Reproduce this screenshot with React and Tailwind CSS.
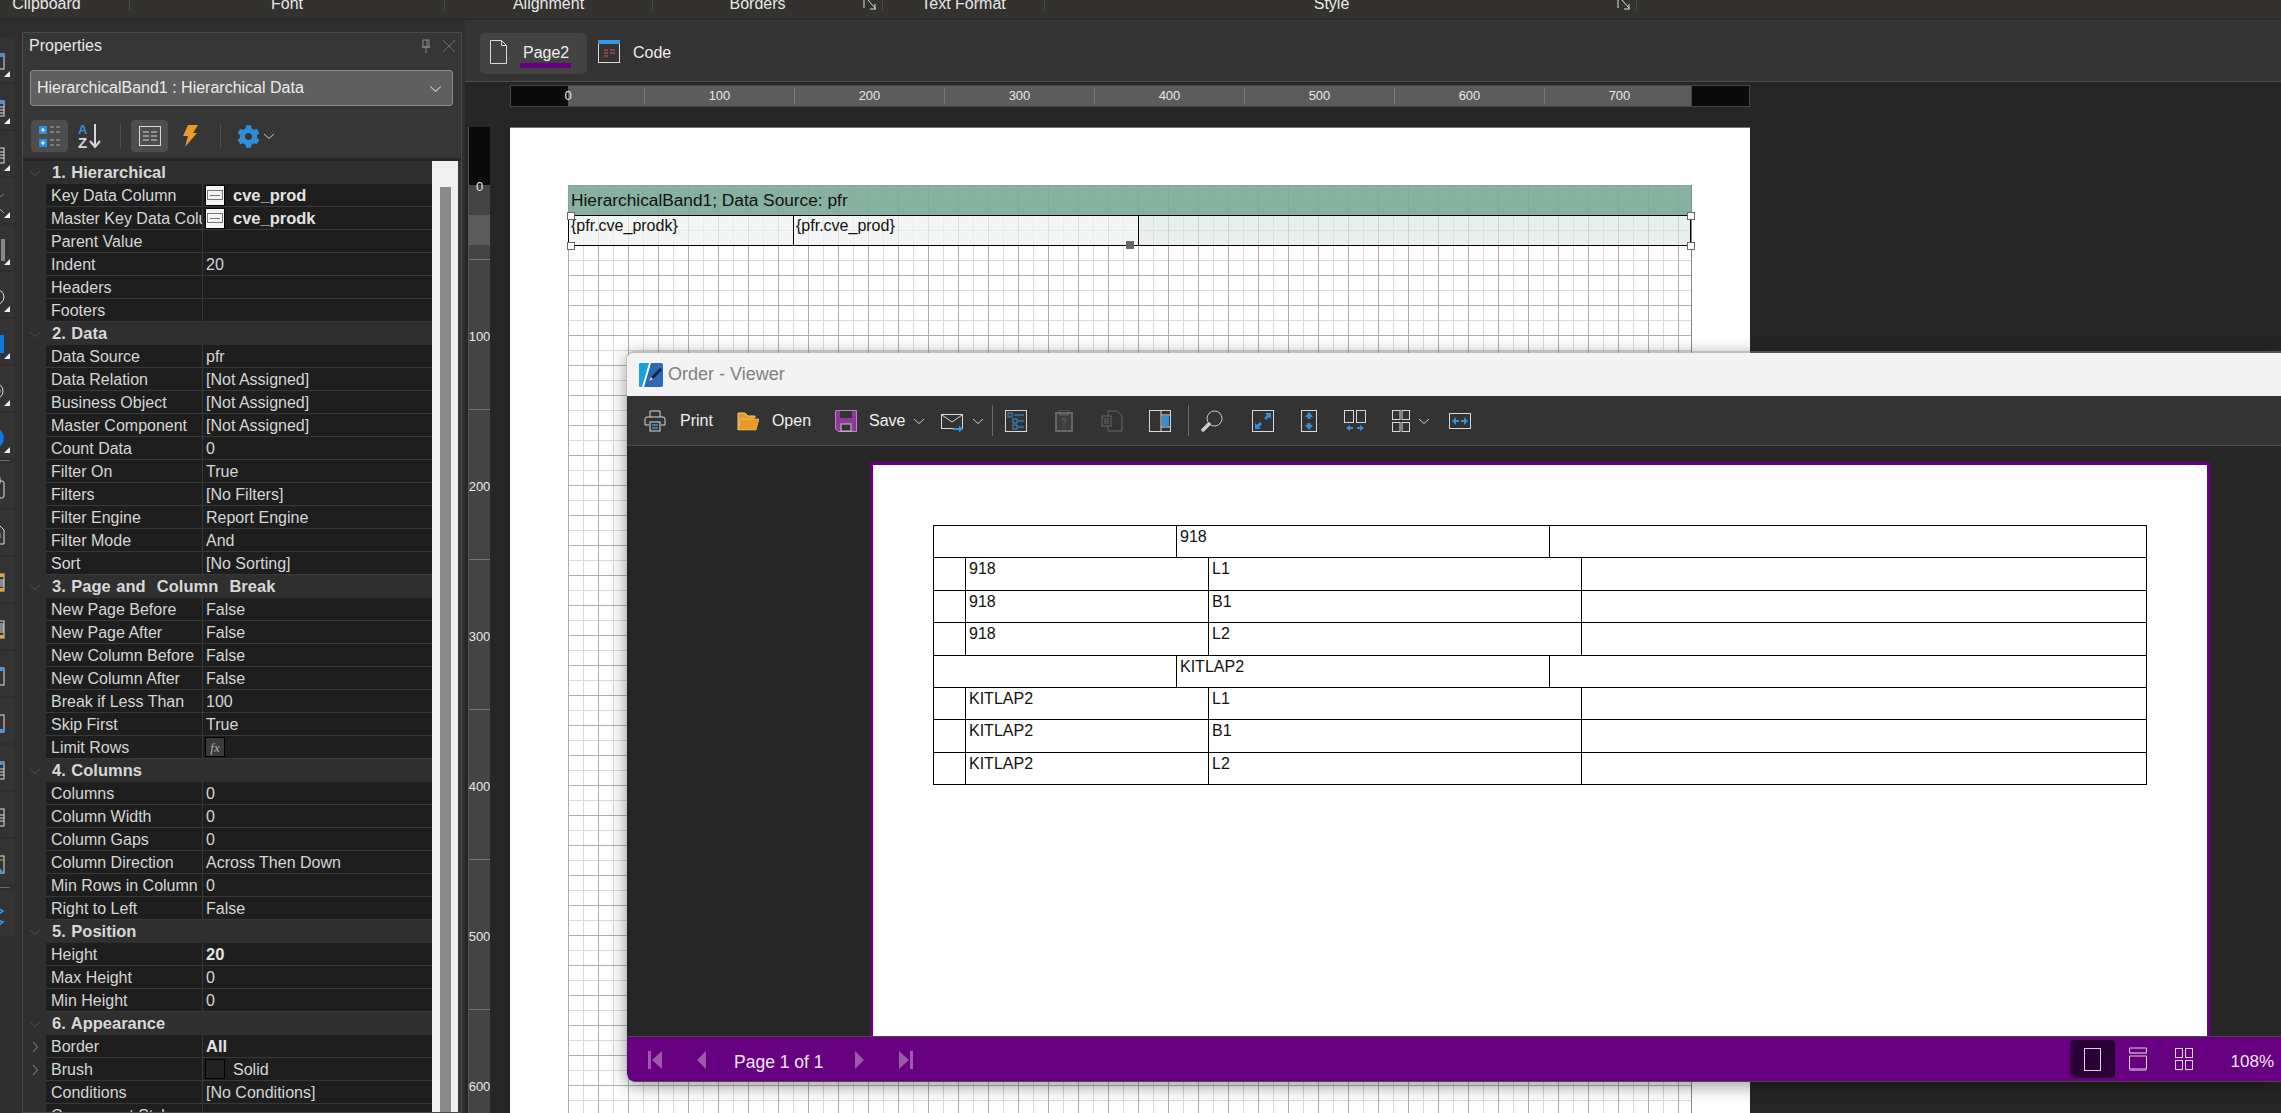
import React from 'react';
import { FaCog } from 'react-icons/fa';

const Chev = ({ className = '', dir = 'down', w = 10, color = '#c8c8c8' }) => (
  <svg width={w} height={w} viewBox="0 0 10 10" className={className} fill="none" stroke={color} strokeWidth="1">
    {dir === 'down' ? <path d="M0 3l5 4.500L10 3" /> : <path d="M3 0l4.500 5L3 10" />}
  </svg>
);

const ribbon = [
  ['Clipboard', 'w-[130px] pr-[36px]', false],
  ['Font', 'w-[315px]', false],
  ['Alignment', 'w-[208px]', false],
  ['Borders', 'w-[230px] pr-[20px]', true],
  ['Text Format', 'w-[162px]', false],
  ['Style', 'w-[592px] pr-[18px]', true],
];

const Launcher = () => (
  <svg width="14" height="10" viewBox="0 0 14 10" className="absolute right-[5px] top-0" fill="none" stroke="#d8d8d8" strokeWidth="1">
    <path d="M1 0v8M13 9H7M5 0l7 8M12 4v5" />
  </svg>
);

const railIcons = [
  <g key="a"><rect x="0" y="3" width="14" height="15" stroke="#ddd" fill="none" /><rect x="0" y="3" width="14" height="3" fill="#3a96e0" /></g>,
  <g key="b"><rect x="0" y="3" width="14" height="15" stroke="#ddd" fill="none" /><rect x="0" y="3" width="14" height="3" fill="#3a96e0" /><path d="M0 9h14M0 12h14M0 15h14" stroke="#ddd" /></g>,
  <g key="c"><rect x="0" y="3" width="14" height="15" stroke="#ddd" fill="none" /><path d="M5 7h9M5 10h9M5 13h9" stroke="#ddd" /></g>,
  <g key="d"><path d="M0 4c5 4 12 0 14-2M0 6l10-4" stroke="#3a96e0" fill="none" /><path d="M0 15c5 0 10 1 14 6" stroke="#d8b25c" fill="none" /></g>,
  <g key="e"><path d="M1 0v22M4 0v22M6 0v22M9 0v22M12 0v22M14 0v22" stroke="#ddd" /></g>,
  <g key="f"><ellipse cx="5" cy="11" rx="9" ry="8" stroke="#ddd" fill="none" /></g>,
  <g key="g"><rect x="0" y="2" width="14" height="18" fill="#1479d6" /></g>,
  <g key="h"><circle cx="5" cy="11" r="8" stroke="#ddd" fill="none" /><circle cx="5" cy="11" r="5" stroke="#ddd" fill="#555" /></g>,
  <g key="i"><ellipse cx="5" cy="11" rx="9" ry="10" fill="#1479d6" /></g>,
  'sep',
  <g key="j"><rect x="0" y="4" width="14" height="17" rx="2" stroke="#ddd" fill="none" /><rect x="4" y="1" width="6" height="5" stroke="#ddd" fill="#333" /></g>,
  <g key="k"><path d="M0 2h10l4 4v14H0z" stroke="#ddd" fill="none" /><path d="M5 9h5v5H5z" stroke="#aaa" fill="none" /></g>,
  <g key="l"><rect x="0" y="3" width="14" height="17" stroke="#ddd" fill="none" /><rect x="0" y="3" width="14" height="3" fill="#eaa12f" /><rect x="0" y="17" width="14" height="3" fill="#eaa12f" /><path d="M5 9h9M5 11h9M5 13h9M5 15h9" stroke="#ddd" /></g>,
  <g key="m"><rect x="0" y="3" width="14" height="17" stroke="#ddd" fill="none" /><rect x="0" y="17" width="14" height="3" fill="#eaa12f" /><path d="M5 6h9M5 8h9M5 10h9M5 12h9M5 14h9" stroke="#ddd" /></g>,
  <g key="n"><rect x="0" y="3" width="14" height="17" stroke="#ddd" fill="none" /><rect x="0" y="3" width="14" height="3" fill="#3a96e0" /></g>,
  <g key="o"><rect x="0" y="3" width="14" height="17" stroke="#ddd" fill="none" /><rect x="0" y="17" width="14" height="3" fill="#3a96e0" /></g>,
  <g key="p"><rect x="0" y="3" width="14" height="17" stroke="#ddd" fill="none" /><rect x="0" y="3" width="14" height="3" fill="#3a96e0" /><path d="M5 10h9M5 13h9M5 16h9" stroke="#ddd" /></g>,
  <g key="q"><rect x="0" y="3" width="14" height="17" stroke="#ddd" fill="none" /><path d="M5 9h9M5 12h9M5 15h9" stroke="#ddd" /></g>,
  <g key="r"><rect x="0" y="3" width="14" height="17" stroke="#ddd" fill="none" /><path d="M0 20L14 20 8 13z" fill="#3a96e0" /><path d="M8 7h6" stroke="#e9a030" /></g>,
  'sep',
  <g key="s"><path d="M0 3l4-2 9 5-4 3M1 16l4-2 8 3-4 3" stroke="#3a96e0" fill="none" strokeWidth="1.500" /></g>,
];

const RailTile = ({ icon, arrow }) => (
  <div className="relative w-[15px] h-[45px] bg-[#333333] overflow-hidden flex items-center">
    <svg width="15" height="22" viewBox="0 0 15 22" className="-ml-[10px] mt-[5px] shrink-0" overflow="hidden">{icon}</svg>
    {arrow && (
      <svg width="6" height="6" viewBox="0 0 6 6" className="absolute left-[4px] bottom-[5px]"><path d="M6 0v6H0z" fill="#f0f0f0" /></svg>
    )}
  </div>
);

const sections = [
  ['1. Hierarchical', [
    ['Key Data Column', 'cve_prod', 'tile'],
    ['Master Key Data Column', 'cve_prodk', 'tile'],
    ['Parent Value', ''],
    ['Indent', '20'],
    ['Headers', ''],
    ['Footers', ''],
  ]],
  ['2. Data', [
    ['Data Source', 'pfr'],
    ['Data Relation', '[Not Assigned]'],
    ['Business Object', '[Not Assigned]'],
    ['Master Component', '[Not Assigned]'],
    ['Count Data', '0'],
    ['Filter On', 'True'],
    ['Filters', '[No Filters]'],
    ['Filter Engine', 'Report Engine'],
    ['Filter Mode', 'And'],
    ['Sort', '[No Sorting]'],
  ]],
  ['3. Page and  Column  Break', [
    ['New Page Before', 'False'],
    ['New Page After', 'False'],
    ['New Column Before', 'False'],
    ['New Column After', 'False'],
    ['Break if Less Than', '100'],
    ['Skip First', 'True'],
    ['Limit Rows', '', 'fx'],
  ]],
  ['4. Columns', [
    ['Columns', '0'],
    ['Column Width', '0'],
    ['Column Gaps', '0'],
    ['Column Direction', 'Across Then Down'],
    ['Min Rows in Column', '0'],
    ['Right to Left', 'False'],
  ]],
  ['5. Position', [
    ['Height', '20', 'bold'],
    ['Max Height', '0'],
    ['Min Height', '0'],
  ]],
  ['6. Appearance', [
    ['Border', 'All', 'bold', true],
    ['Brush', 'Solid', 'brush', true],
    ['Conditions', '[No Conditions]'],
    ['Component Style', ''],
  ]],
];

const ValueCell = ({ value, kind }) => {
  if (kind === 'tile') {
    return (
      <div className="flex items-center h-[22px] pl-[2px]">
        <div className="w-[20px] h-[21px] bg-[#f4f4f4] border border-black flex items-center justify-center shrink-0">
          <div className="w-[16px] h-[10px] border border-[#777] flex items-center justify-center"><div className="w-[10px] h-px bg-[#777]" /></div>
        </div>
        <span className="ml-[8px] font-bold text-[16.5px] text-[#e2e2e2]">{value}</span>
      </div>
    );
  }
  if (kind === 'fx') {
    return (
      <div className="flex items-center h-[22px] pl-[2px]">
        <div className="w-[20px] h-[20px] bg-[#3a3a3a] border border-black flex items-center justify-center font-['Liberation_Serif',serif] italic text-[13px] text-[#aaa]">fx</div>
      </div>
    );
  }
  if (kind === 'brush') {
    return (
      <div className="flex items-center h-[22px] pl-[2px]">
        <div className="w-[20px] h-[20px] bg-[#222] border border-black shrink-0" />
        <span className="ml-[8px]">{value}</span>
      </div>
    );
  }
  return <div className={`pl-[3px] ${kind === 'bold' ? 'font-bold text-[16.5px] text-[#e2e2e2]' : ''}`}>{value}</div>;
};

const PropRow = ({ label, value, kind, expand }) => (
  <div className="flex h-[23px]">
    <div className="w-[23px] flex items-center justify-center bg-[#2f2f2f]">
      {expand && <Chev dir="right" color="#8c8c8c" />}
    </div>
    <div className="flex-1 flex bg-[#1e1e1e] border-b border-[#383838] leading-[23px] text-[#d6d6d6]">
      <div className="w-[157px] pl-[5px] border-r border-[#383838] overflow-hidden whitespace-nowrap">{label}</div>
      <div className="flex-1 overflow-hidden whitespace-nowrap">
        <ValueCell value={value} kind={kind} />
      </div>
    </div>
  </div>
);

const CatRow = ({ title }) => (
  <div className="flex h-[23px] bg-[#2f2f2f]">
    <div className="w-[23px] flex items-center justify-center"><Chev color="#4d4d4d" /></div>
    <div className="pl-[6px] font-bold text-[16.5px] [word-spacing:1px] leading-[23px] text-[#d8d8d8] whitespace-pre">{title}</div>
  </div>
);

const PropertiesPanel = () => (
  <div className="ml-[7px] mt-[12px] w-[440px] border border-[#4a4a4a] bg-[#363636] flex flex-col overflow-hidden">
    <div className="h-[37px] flex items-start justify-between pt-[1px] pl-[6px] pr-[5px] text-[#e8e8e8]">
      <span>Properties</span>
      <div className="flex items-center gap-[10px] pt-[5px]">
        <svg width="12" height="14" viewBox="0 0 12 14" fill="none" stroke="#8a8a8a"><path d="M3 1h6v7H3zM1.500 8h9M6 8v6" /><path d="M7 1v7" /></svg>
        <svg width="14" height="14" viewBox="0 0 14 14" fill="none" stroke="#6e6e6e"><path d="M1 1l12 12M13 1L1 13" /></svg>
      </div>
    </div>
    <div className="mx-[7px] w-[423px] h-[36px] rounded-[3px] bg-[#5f5f5f] border border-[#8a8a8a] flex items-center justify-between pl-[6px] pr-[11px] text-[#ececec]">
      <span>HierarchicalBand1 : Hierarchical Data</span>
      <Chev w={11} />
    </div>
    <div className="h-[32px] mt-[14px] flex items-center pl-[8px]">
      <div className="w-[37px] h-[32px] rounded-[4px] bg-[#4d4d4d] flex items-center justify-center">
        <svg width="24" height="24" viewBox="0 0 24 24" fill="none">
          <rect x="1" y="2" width="8" height="8" rx="1" fill="#2f8fdc" /><path d="M3 6h4M5 4v4" stroke="#fff" />
          <rect x="1" y="15" width="8" height="8" rx="1" fill="#2f8fdc" /><path d="M3 19h4M5 17v4" stroke="#fff" />
          <path d="M12 3h4M18 3h4M12 8h4M18 8h4M12 16h4M18 16h4M12 21h4M18 21h4" stroke="#aaa" />
        </svg>
      </div>
      <svg width="24" height="26" viewBox="0 0 24 26" className="ml-[10px]" fill="none">
        <text x="0" y="11" fontFamily="Liberation Sans, sans-serif" fontWeight="bold" fontSize="13" fill="#2f8fdc">A</text>
        <text x="0" y="25" fontFamily="Liberation Sans, sans-serif" fontWeight="bold" fontSize="15" fill="#d8d8d8">Z</text>
        <path d="M17 1v22M12 18l5 6 5-6" stroke="#d8d8d8" strokeWidth="2" />
      </svg>
      <div className="w-px h-[24px] bg-[#4f4f4f] ml-[18px]" />
      <div className="w-[37px] h-[32px] rounded-[4px] bg-[#4d4d4d] flex items-center justify-center ml-[10px]">
        <svg width="24" height="22" viewBox="0 0 24 22" fill="none" stroke="#d8d8d8">
          <rect x="1.500" y="1.500" width="21" height="19" />
          <path d="M5 7h6M13 7h6M5 11h6M13 11h6M5 15h6M13 15h6" />
        </svg>
      </div>
      <svg width="16" height="22" viewBox="0 0 16 22" className="ml-[14px]">
        <path d="M6 0h10l-5 8h4L3 22l3-11H1z" fill="#e89a2c" />
      </svg>
      <div className="w-px h-[24px] bg-[#4f4f4f] ml-[22px]" />
      <FaCog size={23} color="#2e8fd8" className="ml-[16px]" />
      <Chev className="ml-[4px]" />
    </div>
    <div className="mt-[6px] h-[3px] bg-[#262626]" />
    <div className="flex flex-1 min-h-0 pr-[3px]">
      <div className="w-[409px] overflow-hidden">
        {sections.map(([title, rows]) => (
          <div key={title}>
            <CatRow title={title} />
            {rows.map(([l, v, k, e]) => <PropRow key={l} label={l} value={v} kind={k} expand={e} />)}
          </div>
        ))}
      </div>
      <div className="w-[26px] bg-[#f0f0f0] pt-[26px] pl-[8px]">
        <div className="w-[11px] h-full bg-[#8a8a8a]" />
      </div>
    </div>
  </div>
);

const HRuler = () => (
  <div className="w-[1240px] h-[22px] flex border border-[#444] text-[13px] text-[#e8e8e8] leading-[16px]">
    <div className="w-[57px] bg-[#0a0a0a] shrink-0" />
    <div className="w-[1123px] shrink-0 bg-[#5c5c5c] flex">
      <div className="w-[76px] shrink-0 my-[2px]"><span className="block w-[8px] -ml-[4px] text-center">0</span></div>
      <div className="flex-1 flex overflow-hidden">
        {[100, 200, 300, 400, 500, 600, 700].map((n) => (
          <div key={n} className="w-[150px] shrink-0 my-[2px] border-l border-[#777] text-center">{n}</div>
        ))}
      </div>
    </div>
    <div className="flex-1 bg-[#0a0a0a] border-l border-[#444]" />
  </div>
);

const VRuler = () => (
  <div className="w-[22px] shrink-0 border-l border-[#555] bg-[#444444] text-[13px] text-[#e8e8e8] text-center leading-[16px] overflow-hidden">
    <div className="h-[58px] bg-[#0a0a0a]" />
    <div className="h-[30px] relative"><div className="absolute left-0 right-0 -top-[6px]">0</div></div>
    <div className="h-[30px] bg-[#5c5c5c]" />
    <div className="h-[15px] border-b border-[#777]" />
    {[100, 200, 300, 400, 500, 600].map((n) => (
      <div key={n} className="h-[150px] border-b border-[#777] flex items-center justify-center pt-[4px]">{n}</div>
    ))}
  </div>
);

const Handle = ({ className }) => (
  <div className={`absolute w-[8px] h-[8px] bg-white border border-[#666] ${className}`} />
);

const Page = () => (
  <div className="ml-[20px] w-[1240px] bg-white border-t border-[#777] pl-[58px] pt-[57px]">
    <div className="relative w-[1124px] h-[1000px] border-r border-[#888] bg-[linear-gradient(to_right,#aeaeae_1px,transparent_1px),linear-gradient(to_bottom,#aeaeae_1px,transparent_1px),linear-gradient(to_right,#dadada_1px,transparent_1px),linear-gradient(to_bottom,#dadada_1px,transparent_1px)] bg-[size:30px_30px,30px_30px,15px_15px,15px_15px]">
      <div className="h-[30px] bg-[#7ca999e8] text-[17.3px] leading-[30px] pl-[3px] text-[#111] whitespace-nowrap">HierarchicalBand1; Data Source: pfr</div>
      <div className="h-[31px] flex border-y border-black border-x text-[16px] text-[#111] leading-[20px]">
        <div className="w-[225px] bg-[#f0f3f1b8] border-r border-black pl-[2px]">{'{pfr.cve_prodk}'}</div>
        <div className="w-[345px] bg-[#f0f3f1b8] border-r border-black pl-[2px]">{'{pfr.cve_prod}'}</div>
        <div className="flex-1 bg-[#dce6e1a0]" />
      </div>
      <Handle className="-left-[1px] top-[27px]" />
      <Handle className="-left-[1px] top-[57px]" />
      <Handle className="-right-[4px] top-[27px]" />
      <Handle className="-right-[4px] top-[57px]" />
      <div className="absolute left-[558px] top-[56px] w-[8px] h-[8px] bg-[#666]" />
    </div>
  </div>
);

const TbIcon = ({ children, w = 22, h = 22, className = '' }) => (
  <svg width={w} height={h} viewBox={`0 0 ${w} ${h}`} fill="none" className={`shrink-0 ${className}`}>{children}</svg>
);

const ViewerToolbar = () => (
  <div className="h-[50px] bg-[#333333] border-b border-[#4a4a4a] flex items-center text-[#f0f0f0] pl-[17px]">
    <TbIcon>
      <path d="M6 7V1h10v6M5 15H1V9q0-2 2-2h16q2 0 2 2v6h-4" stroke="#d8d8d8" />
      <rect x="6" y="12" width="10" height="9" stroke="#d8d8d8" />
      <path d="M8 15h6M8 18h6" stroke="#3a96e0" strokeWidth="1.500" />
    </TbIcon>
    <span className="ml-[14px]">Print</span>
    <TbIcon className="ml-[24px]">
      <path d="M1 20V3h7l3 3h7v2" stroke="#f0d070" fill="#e8992a" />
      <path d="M1 20l3-11h18l-3 11z" fill="#e8992a" stroke="#f0d070" strokeWidth=".6" />
    </TbIcon>
    <span className="ml-[13px]">Open</span>
    <TbIcon className="ml-[24px]">
      <path d="M.5.5h21v21H3L.5 19z" fill="#8b3a96" stroke="#c57ad0" />
      <rect x="5" y="1" width="12" height="7" fill="#333" />
      <rect x="6" y="14" width="10" height="7" fill="#333" stroke="#d8c0dc" />
    </TbIcon>
    <span className="ml-[12px]">Save</span>
    <Chev className="ml-[8px]" />
    <TbIcon className="ml-[17px]">
      <rect x=".5" y="4.500" width="21" height="14" stroke="#d8d8d8" />
      <path d="M1 5l10 7 10-7" stroke="#d8d8d8" />
      <path d="M12 18h6v-2.500l4 3.500-4 3.500V20h-6z" fill="#3a96e0" />
    </TbIcon>
    <Chev className="ml-[10px]" />
    <div className="w-px h-[31px] bg-[#6a6a6a] ml-[9px]" />
    <TbIcon className="ml-[12px]">
      <rect x=".5" y=".5" width="21" height="21" stroke="#d8d8d8" />
      <rect x="3" y="3" width="4" height="4" stroke="#3a96e0" />
      <path d="M9 5h10M13 11h6M13 17h6" stroke="#3a96e0" />
      <rect x="8" y="9" width="4" height="4" stroke="#3a96e0" />
      <rect x="8" y="15" width="4" height="4" stroke="#3a96e0" />
    </TbIcon>
    <TbIcon w={18} className="ml-[28px]">
      <rect x="1" y="3" width="16" height="18" stroke="#666" strokeWidth="2" fill="#3d3d3d" />
      <rect x="5" y="0" width="8" height="5" stroke="#666" />
      <text x="6" y="16" fontSize="10" fill="#666" fontFamily="Liberation Sans, sans-serif">?</text>
    </TbIcon>
    <TbIcon className="ml-[28px]">
      <path d="M7 6V1h9l5 5v15H7v-5" stroke="#666" />
      <rect x="1" y="6" width="9" height="10" stroke="#666" />
      <path d="M3 9h5M3 11h5M3 13h5" stroke="#666" />
    </TbIcon>
    <TbIcon className="ml-[26px]">
      <rect x=".5" y=".5" width="21" height="21" stroke="#d8d8d8" />
      <path d="M12 1v20M12 5h9M12 17h9" stroke="#d8d8d8" />
      <rect x="13" y="6" width="7" height="10" fill="#2f8fdc" />
    </TbIcon>
    <div className="w-px h-[31px] bg-[#6a6a6a] ml-[17px]" />
    <TbIcon className="ml-[12px]">
      <circle cx="13.500" cy="8.500" r="7.500" stroke="#cfcfcf" />
      <path d="M8 14L2 20" stroke="#cfcfcf" strokeWidth="3.500" strokeLinecap="round" />
    </TbIcon>
    <TbIcon className="ml-[29px]">
      <rect x=".5" y=".5" width="21" height="21" stroke="#d8d8d8" />
      <path d="M13 3h6v6l-2-2-3 3-2-2 3-3zM9 19H3v-6l2 2 3-3 2 2-3 3z" fill="#3391dc" />
    </TbIcon>
    <TbIcon w={16} className="ml-[27px]">
      <rect x=".5" y=".5" width="15" height="21" stroke="#d8d8d8" />
      <path d="M8 2l4 5H9.500v2h-3V7H4zM8 20l4-5H9.500v-2h-3v2H4z" fill="#3391dc" />
    </TbIcon>
    <TbIcon className="ml-[27px]">
      <rect x=".5" y=".5" width="9" height="12" stroke="#d8d8d8" />
      <rect x="12.500" y=".5" width="9" height="12" stroke="#d8d8d8" />
      <path d="M2 18l4-3v2h3v2H6v2zM20 18l-4-3v2h-3v2h3v2z" fill="#3391dc" />
    </TbIcon>
    <TbIcon w={18} className="ml-[26px]">
      <rect x=".5" y=".5" width="7.500" height="9" stroke="#d8d8d8" />
      <rect x="10" y=".5" width="7.500" height="9" stroke="#d8d8d8" />
      <rect x=".5" y="12.500" width="7.500" height="9" stroke="#d8d8d8" />
      <rect x="10" y="12.500" width="7.500" height="9" stroke="#d8d8d8" />
    </TbIcon>
    <Chev className="ml-[9px]" />
    <TbIcon className="ml-[20px]" h={16}>
      <rect x=".5" y=".5" width="21" height="15" stroke="#d8d8d8" />
      <path d="M3 8l4-4v3h3v2H7v3zM19 8l-4-4v3h-3v2h3v3z" fill="#3391dc" />
    </TbIcon>
  </div>
);

const Cell = ({ w, text, last }) => (
  <div className={`${w || ''} ${last ? 'flex-1' : 'border-r border-black'} pl-[3px] leading-[21px] whitespace-nowrap`}>{text}</div>
);

const ReportRow = ({ group, a, b, h }) => (
  <div className={`flex border-b border-black ${h}`}>
    {group ? (
      <>
        <Cell w="w-[243px]" />
        <Cell w="w-[373px]" text={a} />
        <Cell last />
      </>
    ) : (
      <>
        <Cell w="w-[32px]" />
        <Cell w="w-[243px]" text={a} />
        <Cell w="w-[373px]" text={b} />
        <Cell last />
      </>
    )}
  </div>
);

const Report = () => (
  <div className="w-[1214px] border-t border-l border-r border-black text-[16px] text-[#111]">
    <ReportRow group a="918" h="h-[32px]" />
    <ReportRow a="918" b="L1" h="h-[33px]" />
    <ReportRow a="918" b="B1" h="h-[32px]" />
    <ReportRow a="918" b="L2" h="h-[33px]" />
    <ReportRow group a="KITLAP2" h="h-[32px]" />
    <ReportRow a="KITLAP2" b="L1" h="h-[32px]" />
    <ReportRow a="KITLAP2" b="B1" h="h-[33px]" />
    <ReportRow a="KITLAP2" b="L2" h="h-[32px]" />
  </div>
);

const StatusBar = () => (
  <div className="h-[46px] bg-[#660080] border-t border-[#4a4a4a] border-b flex items-center text-[#f0e6f2] rounded-bl-[8px]">
    <svg width="14" height="18" viewBox="0 0 14 18" className="ml-[21px] mt-[2px]" fill="#9a5aa8"><path d="M0 0h3v18H0zM14 0v18L4 9z" /></svg>
    <svg width="9" height="18" viewBox="0 0 9 18" className="ml-[35px] mt-[2px]" fill="#9a5aa8"><path d="M9 0v18L0 9z" /></svg>
    <span className="ml-[28px] mt-[6px] text-[17.5px]">Page 1 of 1</span>
    <svg width="9" height="18" viewBox="0 0 9 18" className="ml-[31px] mt-[2px]" fill="#9a5aa8"><path d="M0 0v18l9-9z" /></svg>
    <svg width="14" height="18" viewBox="0 0 14 18" className="ml-[35px] mt-[2px]" fill="#9a5aa8"><path d="M11 0h3v18h-3zM0 0v18l10-9z" /></svg>
    <div className="ml-auto w-[45px] h-[38px] rounded-[4px] bg-[#2b0038] flex items-center justify-center">
      <svg width="17" height="23" viewBox="0 0 17 23" fill="none" stroke="#d8d8d8"><rect x=".5" y=".5" width="16" height="22" /></svg>
    </div>
    <svg width="18" height="24" viewBox="0 0 18 24" className="ml-[14px]" fill="none" stroke="#d8d8d8">
      <path d="M.5 1h17v5H.5z" /><path d="M.5 6h17" stroke="#a77ab4" strokeWidth="2" />
      <path d="M.5 9h17v13H.5z" /><path d="M.5 23h17" stroke="#a77ab4" strokeWidth="2" />
    </svg>
    <svg width="18" height="22" viewBox="0 0 18 22" className="ml-[28px]" fill="none" stroke="#d8d8d8">
      <rect x=".5" y=".5" width="7" height="9" /><rect x="10.500" y=".5" width="7" height="9" />
      <rect x=".5" y="12.500" width="7" height="9" /><rect x="10.500" y="12.500" width="7" height="9" />
    </svg>
    <span className="ml-[38px] mr-[7px] mt-[6px] text-[17px]">108%</span>
  </div>
);

const Viewer = () => (
  <div className="absolute left-[626px] top-[351px] w-[1655px] h-[731px] flex flex-col rounded-tl-[8px] rounded-bl-[8px] border-t-2 border-l border-[#80808080] shadow-[0_4px_18px_rgba(0,0,0,0.4)] overflow-hidden">
    <div className="h-[43px] bg-[#f3f3f3] flex items-center pl-[12px]">
      <svg width="24" height="24" viewBox="0 0 24 24">
        <rect width="24" height="24" rx="2" fill="#2f68b4" />
        <path d="M0 2q0-2 2-2h8L3 24H2q-2 0-2-2z" fill="#18a0e0" />
        <path d="M10 0h2L5 24H3z" fill="#fff" />
        <path d="M21 5l2 2-9 9-4 2 2-4z" fill="#10244a" />
        <path d="M10 18l2-4 2 2z" fill="#f0d8b0" />
      </svg>
      <span className="ml-[5px] text-[18px] text-[#808080]">Order - Viewer</span>
    </div>
    <ViewerToolbar />
    <div className="flex-1 min-h-0 bg-[#262626] pl-[243px] pt-[16px]">
      <div className="w-[1340px] h-full border-x-[3px] border-t-[3px] border-[#660080] bg-white pl-[60px] pt-[60px]">
        <Report />
      </div>
    </div>
    <StatusBar />
  </div>
);

export default function App() {
  return (
    <div className="relative w-[2281px] h-[1113px] overflow-hidden bg-[#2e2e2e] font-['Liberation_Sans',Arial,sans-serif] text-[16px]">
      <div className="h-[20px] bg-[#33322f] border-b-2 border-[#2a2a2a] flex overflow-hidden text-[#e8e8e8]">
        {ribbon.map(([label, w, launcher]) => (
          <div key={label} className={`relative ${w} shrink-0 h-[10px] border-r border-[#4a4a4a] text-center leading-[18px]`}>
            <div className="-mt-[5px]">{label}</div>
            {launcher && <Launcher />}
          </div>
        ))}
      </div>
      <div className="flex h-[1093px]">
        <div className="w-[15px] shrink-0 pt-[17px] flex flex-col gap-[2px]">
          {railIcons.map((icon, i) => (
            icon === 'sep'
              ? <div key={i} className={`h-px w-[10px] bg-[#6a6a6a] ${i === 9 ? '' : 'my-px'}`} />
              : <RailTile key={i} icon={icon} arrow={i < 9} />
          ))}
        </div>
        <PropertiesPanel />
        <div className="ml-[3px] flex-1 flex flex-col min-w-0">
          <div className="h-[62px] bg-[#343434] border-b border-[#4b4b4b] pt-[13px] pl-[15px] flex text-[#eeeeee] shrink-0">
            <div className="w-[107px] h-[41px] rounded-[5px] bg-[#434343] flex pl-[10px] pt-[7px]">
              <svg width="17" height="24" viewBox="0 0 17 24" fill="none" stroke="#d8d8d8"><path d="M.5.5h11l5 5v18H.5zM11.500.5v5h5" /></svg>
              <div className="relative ml-[16px] leading-[26px]">
                Page2
                <div className="absolute -left-[3px] -right-[2px] top-[23px] h-[5px] bg-[#660080]" />
              </div>
            </div>
            <svg width="22" height="23" viewBox="0 0 22 23" fill="none" className="ml-[11px] mt-[7px]">
              <rect x=".5" y=".5" width="21" height="22" stroke="#d8d8d8" />
              <rect x="0" y="0" width="22" height="4" fill="#3a96e0" />
              <path d="M6 10h4M12 10h5M6 13h4M12 13h5M6 16h4" stroke="#d9534f" />
            </svg>
            <span className="ml-[13px] leading-[40px]">Code</span>
          </div>
          <div className="h-[45px] shrink-0 bg-[#262626] pt-[3px] pl-[45px]"><HRuler /></div>
          <div className="flex-1 min-h-0 bg-[#262626] flex pl-[3px] overflow-hidden">
            <VRuler />
            <Page />
          </div>
        </div>
      </div>
      <Viewer />
    </div>
  );
}
